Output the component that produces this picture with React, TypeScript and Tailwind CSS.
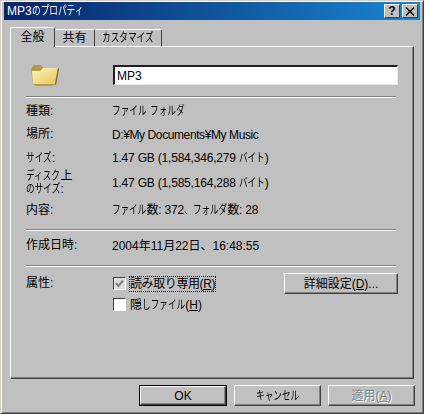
const font = { fontFamily: '"Liberation Sans", "Noto Sans CJK JP", sans-serif' };

// the original font has narrow proportional kana, so squeeze them
function Kana({ children }: { children: string }) {
  return (
    <span
      className="inline-block origin-left scale-x-[0.72] whitespace-nowrap"
      style={{ width: children.length * 8.64 }}
    >
      {children}
    </span>
  );
}

function Row({ label, value, h, valueClass = "" }: { label: React.ReactNode; value: React.ReactNode; h: string; valueClass?: string }) {
  return (
    <div className={`flex items-center ${h}`}>
      <div className="w-[86px] leading-[13px]">{label}</div>
      <div className={`whitespace-nowrap ${valueClass}`}>{value}</div>
    </div>
  );
}

function Sep() {
  return <div className="h-[2px] border-t border-[#808080] bg-white" />;
}

function Btn({ children, className = "" }: { children: React.ReactNode; className?: string }) {
  return (
    <button
      className={`flex items-center justify-center h-[21px] bg-[#c0c0c0] border border-t-white border-l-white border-r-[#404040] border-b-[#404040] shadow-[inset_-1px_-1px_0_#808080] ${className}`}
    >
      {children}
    </button>
  );
}

export default function App() {
  return (
    <div
      style={font}
      className="w-[424px] h-[414px] overflow-hidden bg-[#c0c0c0] text-[12px] text-black border border-t-[#d4d0c8] border-l-[#d4d0c8] border-r-[#404040] border-b-[#404040] shadow-[inset_1px_1px_0_#fff,inset_-1px_-1px_0_#808080] px-[3px] pt-[1px]"
    >
      {/* title bar */}
      <div className="flex items-center justify-between h-[18px] pl-[3px] pr-[2px] bg-gradient-to-r from-[#0a246a] to-[#1a86d0] text-white">
        <span className="text-[12px] leading-none whitespace-nowrap">
          MP3<Kana>のプロパティ</Kana>
        </span>
        <div className="flex">
          <div className="flex items-center justify-center w-[16px] h-[14px] bg-[#c0c0c0] text-black font-bold text-[12px] leading-none border border-t-white border-l-white border-r-[#404040] border-b-[#404040]">
            ?
          </div>
          <div className="flex items-center justify-center w-[16px] h-[14px] ml-[2px] bg-[#c0c0c0] border border-t-white border-l-white border-r-[#404040] border-b-[#404040]">
            <svg width="10" height="9" viewBox="0 0 10 9">
              <path d="M1 0.5 L9 8.5 M9 0.5 L1 8.5" stroke="#000" strokeWidth="1.4" />
            </svg>
          </div>
        </div>
      </div>

      <div className="pl-[6px] pr-[6px] pt-[7px]">
        {/* tabs */}
        <div className="relative z-10 flex items-end h-[20px] -mb-[1px]">
          <div className="flex items-center justify-center w-[45px] h-[20px] pb-[2px] bg-[#c0c0c0] border-l border-t border-white border-r border-r-[#404040] rounded-t-[2px]">
            全般
          </div>
          <div className="flex items-center justify-center w-[40px] h-[18px] bg-[#c0c0c0] border-t border-t-white border-r border-r-[#404040] border-b border-b-white rounded-t-[2px]">
            共有
          </div>
          <div className="flex items-center justify-center w-[67px] h-[18px] bg-[#c0c0c0] border-t border-t-white border-r border-r-[#404040] border-b border-b-white rounded-t-[2px]">
            <Kana>カスタマイズ</Kana>
          </div>
        </div>

        {/* panel */}
        <div className="h-[333px] border border-t-white border-l-white border-r-[#404040] border-b-[#404040] shadow-[inset_-1px_-1px_0_#808080] pl-[15px] pr-[17px]">
          <div className="flex items-center h-[49px] pt-[7px]">
            <div className="w-[87px] pl-[4px] shrink-0">
              <svg width="30" height="24" viewBox="0 0 30 24" className="block">
                <defs>
                  <linearGradient id="fold" x1="0" y1="0" x2="1" y2="1">
                    <stop offset="0" stopColor="#fdf6b8" />
                    <stop offset="1" stopColor="#e6c45c" />
                  </linearGradient>
                </defs>
                <path d="M3 21 L1 7 L3 2 L11 2 L13 5 L26 5 L27 9 L26 21 L22 23 L6 23 Z" fill="#b09a48" />
                <path d="M3 21 L2 8 L10 8 L13 5 L28 5 L25 21 Z" fill="url(#fold)" />
                <path d="M25 21 L28 5 L29 6 L26 22 Z" fill="#6b6440" />
              </svg>
            </div>
            <div className="flex items-center w-[285px] shrink-0 h-[20px] pl-[2px] bg-white border-t-2 border-l-2 border-[#202020] border-r border-b border-r-[#e8e8e8] border-b-[#e8e8e8]">
              MP3
            </div>
          </div>
          <Sep />
          <div className="pt-[1px]">
            <Row h="h-[24px]" label="種類:" value={<><Kana>ファイル</Kana> <Kana>フォルダ</Kana></>} />
            <Row h="h-[23px]" label="場所:" value="D:¥My Documents¥My Music" valueClass="tracking-[-0.4px]" />
            <Row h="h-[24px]" label={<><Kana>サイズ</Kana>:</>} value={<>1.47 GB (1,584,346,279 <Kana>バイト</Kana>)</>} valueClass="tracking-[-0.2px]" />
            <Row
              h="h-[25px]"
              label={
                <>
                  <Kana>ディスク</Kana>上
                  <br />
                  <Kana>のサイズ</Kana>:
                </>
              }
              value={<>1.47 GB (1,585,164,288 <Kana>バイト</Kana>)</>}
              valueClass="tracking-[-0.2px]"
            />
            <Row
              h="h-[30px]"
              label="内容:"
              value={<><Kana>ファイル</Kana>数: 372<Kana>、</Kana><Kana>フォルダ</Kana>数: 28</>}
              valueClass="tracking-[-0.2px]"
            />
          </div>
          <div className="pt-[4px]">
            <Sep />
          </div>
          <div className="pt-[3px]">
            <Row h="h-[23px]" label="作成日時:" value="2004年11月22日、16:48:55" />
          </div>
          <div className="pt-[8px]">
            <Sep />
          </div>
          <div className="flex pt-[6px]">
            <div className="w-[87px] shrink-0 pt-[1px]">属性:</div>
            <div className="w-[171px] shrink-0">
              <div className="flex items-center h-[21px]">
                <span className="flex items-center justify-center w-[13px] h-[13px] bg-[#dcdcdc] border border-t-[#404040] border-l-[#404040] border-r-white border-b-white">
                  <svg width="9" height="9" viewBox="0 0 9 9">
                    <path d="M1 4 L3.5 7 L8 1.5" fill="none" stroke="#808080" strokeWidth="2" />
                  </svg>
                </span>
                <span className="ml-[3px] border border-dotted border-black leading-[14px] whitespace-nowrap tracking-[-0.4px]">
                  読み取り専用(<u>R</u>)
                </span>
              </div>
              <div className="flex items-center h-[21px]">
                <span className="w-[13px] h-[13px] bg-white border border-t-[#404040] border-l-[#404040] border-r-white border-b-white" />
                <span className="ml-[4px] whitespace-nowrap">
                  隠<Kana>しファイル</Kana>(<u>H</u>)
                </span>
              </div>
            </div>
            <Btn className="w-[114px] shrink-0">
              詳細設定(<u>D</u>)...
            </Btn>
          </div>
        </div>

        {/* bottom buttons */}
        <div className="flex justify-end gap-[7px] pt-[6px] -mr-[1px]">
          <div className="border border-black">
            <Btn className="w-[86px] !h-[19px]">OK</Btn>
          </div>
          <Btn className="w-[87px]">
            <Kana>キャンセル</Kana>
          </Btn>
          <Btn className="w-[87px] text-[#808080] [text-shadow:1px_1px_0_#fff]">
            適用(<u>A</u>)
          </Btn>
        </div>
      </div>
    </div>
  );
}
